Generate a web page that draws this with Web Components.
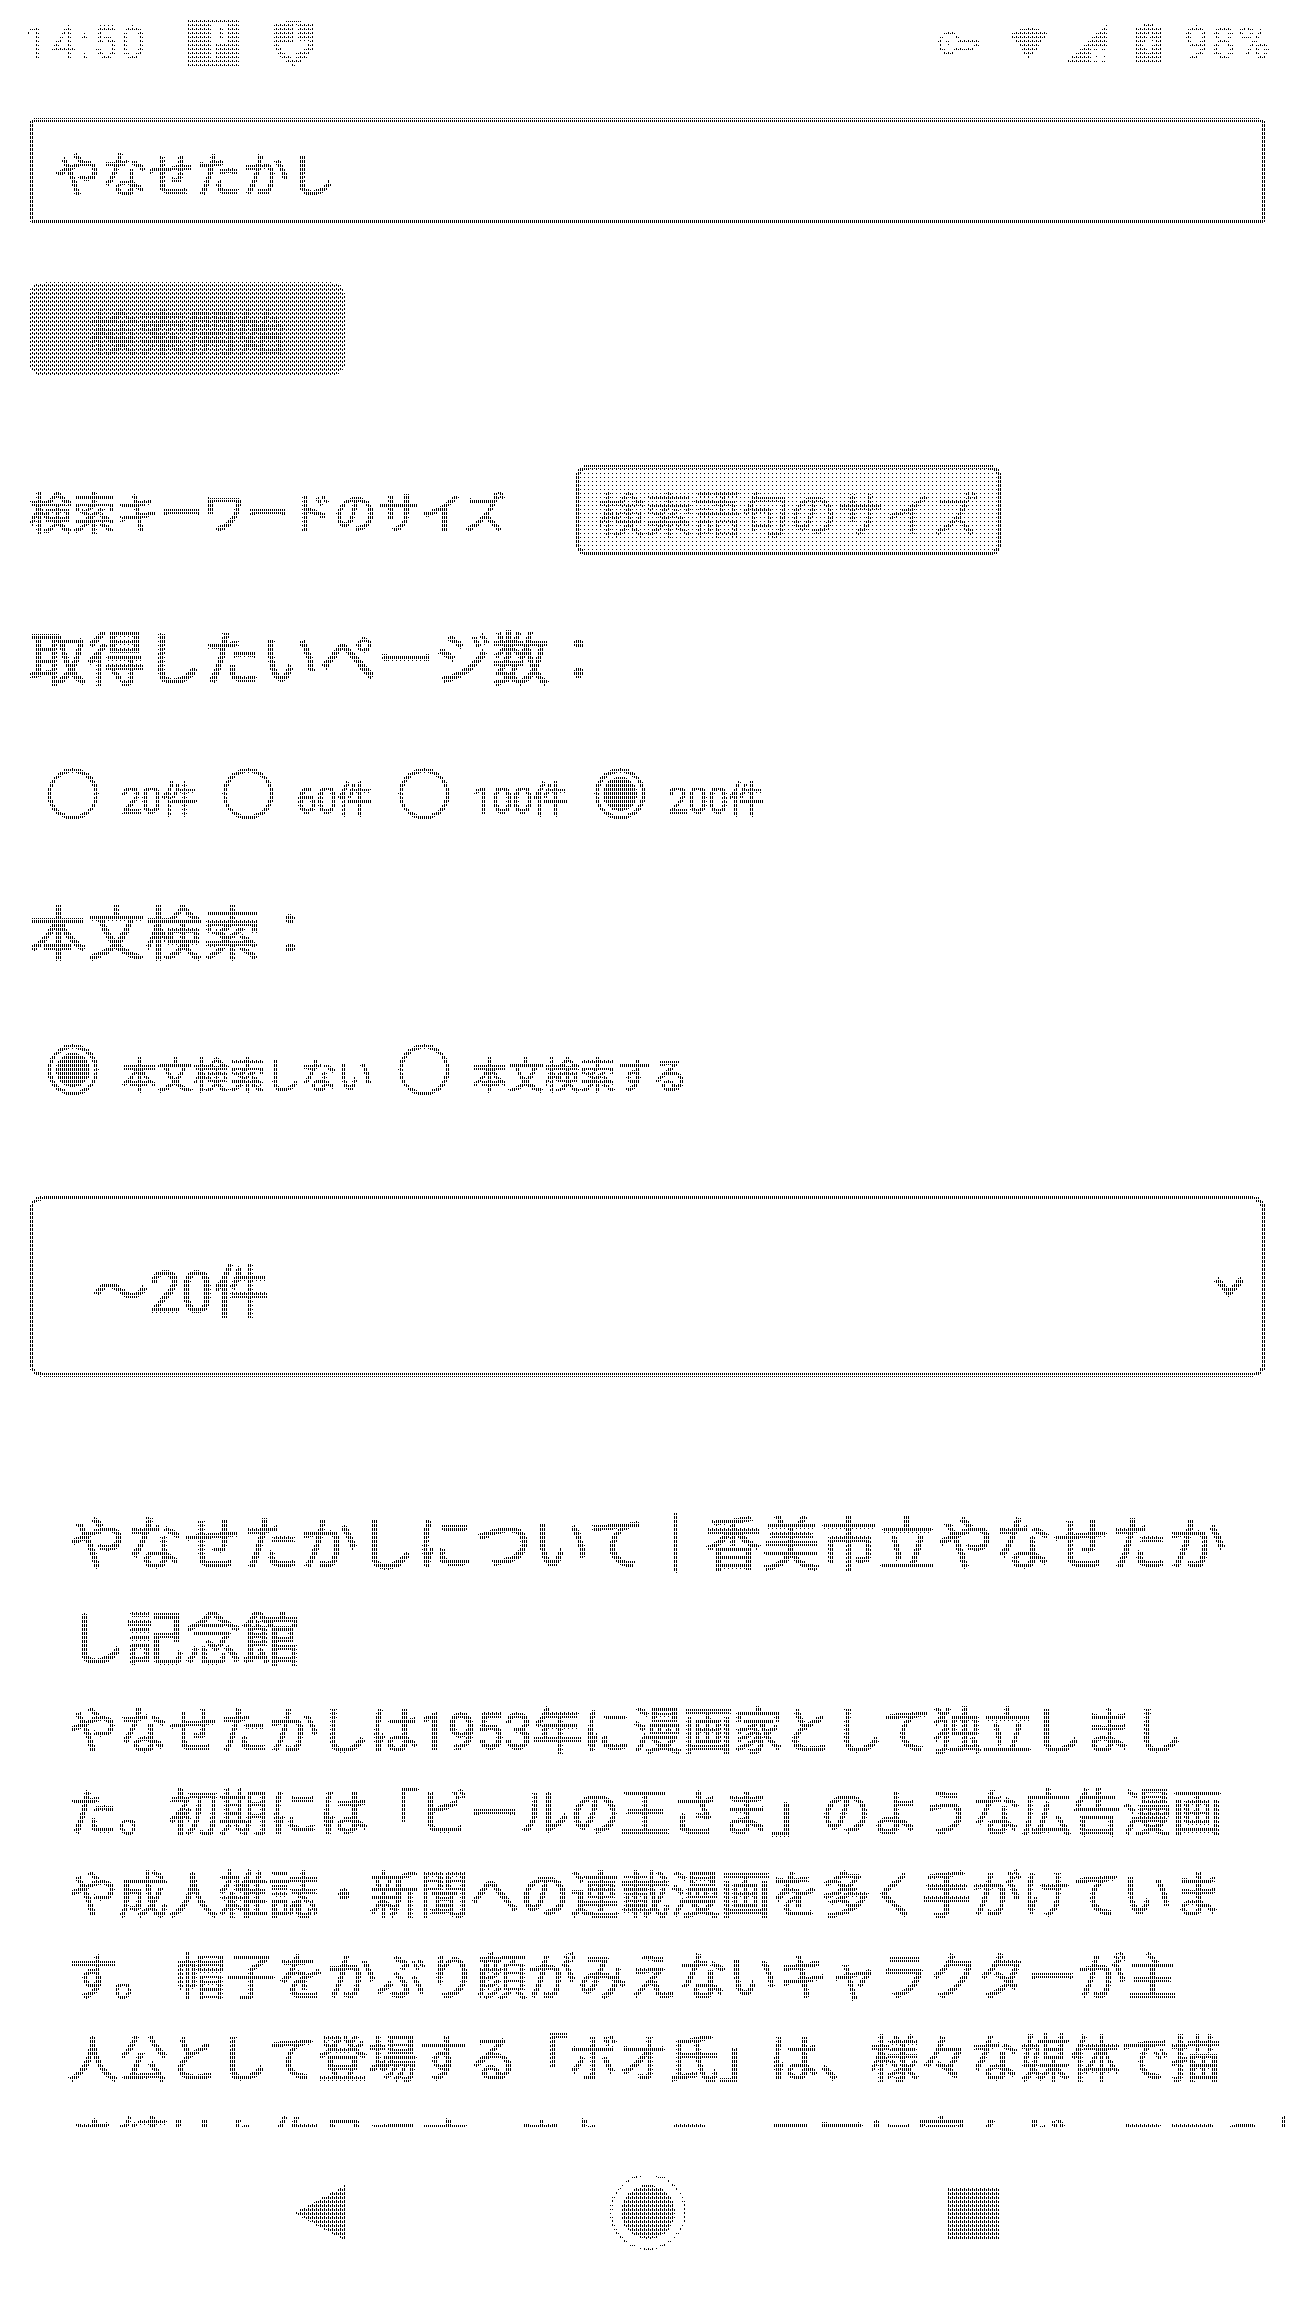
<!DOCTYPE html>
<html lang="ja">
<head>
<meta charset="utf-8">
<title>やなせたかし</title>
<style>
  html, body { margin: 0; padding: 0; background: #fff; }
</style>
</head>
<body>
<app-screen>
  <status-bar></status-bar>
  <search-form>
    <text-field value="やなせたかし"></text-field>
    <action-button>検索開始</action-button>
    <size-tabs first="検索キーワードのサイズ" second="検索語句のサイズ"></size-tabs>
    <form-heading>取得したいページ数&#xFF1A;</form-heading>
    <radio-row style="margin-top:68px">
      <radio-option>20件</radio-option>
      <radio-option>60件</radio-option>
      <radio-option>100件</radio-option>
      <radio-option checked>200件</radio-option>
    </radio-row>
    <form-heading style="margin-top:76px">本文検索&#xFF1A;</form-heading>
    <radio-row style="margin-top:69px">
      <radio-option checked>本文検索しない</radio-option>
      <radio-option>本文検索する</radio-option>
    </radio-row>
    <select-box>〜20件</select-box>
  </search-form>
  <result-item title-text="やなせたかしについて&#xFF5C;香美市立やなせたか<br>し記念館">
    やなせたかしは1953年に漫画家として独立しまし<br>た。初期には「ビールの王さま」のような広告漫画<br>や成人雑誌・新聞への連載漫画を多く手がけていま<br>す。 帽子をかぶり顔がみえないキャラクターが主<br>人公として登場する「ボオ氏」は、様々な媒体で描<br>き続けた作品です。また、ユーモアに富んだ一コマの共く
  </result-item>
  <nav-bar></nav-bar>
</app-screen>

<script>
class AppScreen extends HTMLElement {
  constructor() {
    super();
    this.attachShadow({ mode: "open" }).innerHTML = `
      <style>
        :host { display: block; width: 1294px; height: 2300px; overflow: hidden; }
        .frame {
          display: flex;
          flex-direction: column;
          width: 1294px;
          height: 2300px;
          background: #fff;
          color: #000;
          font-family: Roboto, "Noto Sans CJK JP", sans-serif;
          -webkit-text-stroke: 1.2px currentColor;
          filter: url(#halftone);
        }
        svg { display: block; width: 0; height: 0; }
      </style>
      <svg aria-hidden="true">
        <!-- 4x4 threshold tile: odd columns and the last row always stay white -->
        <filter id="halftone" filterUnits="userSpaceOnUse" primitiveUnits="userSpaceOnUse"
                x="0" y="0" width="1294" height="2300" color-interpolation-filters="sRGB">
          <feFlood x="0" y="0" width="4" height="4" flood-color="#000" result="base"/>
          <feFlood x="0" y="1" width="1" height="1" flood-color="rgb(237,237,237)" result="c1"/>
          <feFlood x="2" y="1" width="1" height="1" flood-color="rgb(199,199,199)" result="c2"/>
          <feFlood x="0" y="0" width="1" height="1" flood-color="rgb(158,158,158)" result="c3"/>
          <feFlood x="2" y="2" width="1" height="1" flood-color="rgb(117,117,117)" result="c4"/>
          <feFlood x="0" y="2" width="1" height="1" flood-color="rgb(77,77,77)" result="c5"/>
          <feFlood x="2" y="0" width="1" height="1" flood-color="rgb(38,38,38)" result="c6"/>
          <feMerge x="0" y="0" width="4" height="4" result="cell">
            <feMergeNode in="base"/><feMergeNode in="c1"/><feMergeNode in="c2"/>
            <feMergeNode in="c3"/><feMergeNode in="c4"/><feMergeNode in="c5"/><feMergeNode in="c6"/>
          </feMerge>
          <feTile x="0" y="0" width="1294" height="2300" in="cell" result="tile"/>
          <feComposite in="SourceGraphic" in2="tile" operator="arithmetic" k1="0" k2="1" k3="-1" k4="0.5"/>
          <feComponentTransfer>
            <feFuncR type="linear" slope="255" intercept="-254"/>
            <feFuncG type="linear" slope="255" intercept="-254"/>
            <feFuncB type="linear" slope="255" intercept="-254"/>
            <feFuncA type="discrete" tableValues="1 1"/>
          </feComponentTransfer>
        </filter>
      </svg>
      <div class="frame"><slot></slot></div>
    `;
  }
}

class StatusBar extends HTMLElement {
  constructor() {
    super();
    this.attachShadow({ mode: "open" }).innerHTML = `
      <style>
        :host {
          display: flex;
          align-items: flex-start;
          justify-content: space-between;
          height: 118px;
          padding: 0 22px 0 24px;
          box-sizing: border-box;
          color: #9a9a9a;
          font-size: 44px;
          letter-spacing: 3px;
          -webkit-text-stroke: 0.5px currentColor;
        }
        .group { display: flex; align-items: center; height: 86px; }
        svg { display: block; fill: #808080; flex: none; }
        .time { width: 163px; line-height: 86px; }
        .pct { margin-left: 22px; letter-spacing: 2px; }
      </style>
      <div class="group">
        <span class="time">14:50</span>
        <svg width="53" height="50" viewBox="0 0 53 50" style="margin-right:32px">
          <path fill-rule="evenodd" d="M0 0h53v50H0zM25 4v36h4V26h12V4zm7 4h5v14h-5z"/>
        </svg>
        <svg width="44" height="46" viewBox="0 0 44 46">
          <path fill-rule="evenodd" d="M22 0l20 4v18c0 11-9 19-20 24C11 41 2 33 2 22V4zM22 5v19H7c1 6 8 12 15 15 2-1 4-2 5-3l-4-2c7-3 13-7 14-12v-1H25V5z"/>
        </svg>
      </div>
      <div class="group">
        <svg width="43" height="24" viewBox="0 0 43 24" style="margin-right:29px">
          <path fill="none" stroke="#808080" stroke-width="3" d="M12 2a10 10 0 1 0 0 20c5 0 7-4 8-5h3l3 3 4-3 3 2 8-7-2-3H20c-1-3-4-7-8-7z"/>
          <circle cx="9" cy="12" r="2.5"/>
        </svg>
        <svg width="38" height="31" viewBox="0 0 38 31" style="margin-right:17px">
          <path d="M0 6C5 2 12 0 19 0s14 2 19 6L19 31z"/>
        </svg>
        <svg width="43" height="39" viewBox="0 0 43 39" style="margin-right:27px">
          <path d="M42 0v22H26v17H0z"/>
          <path d="M29 26h13M29 32h13M29 38h13" stroke="#808080" stroke-width="2" stroke-dasharray="4 3"/>
        </svg>
        <svg width="27" height="42" viewBox="0 0 27 42">
          <path fill-rule="evenodd" d="M8 0h11v4h8v38H0V4h8zM16 10L8 24h5v9l7-14h-5z"/>
        </svg>
        <span class="pct">98%</span>
      </div>
    `;
  }
}

class SearchForm extends HTMLElement {
  constructor() {
    super();
    this.attachShadow({ mode: "open" }).innerHTML = `
      <style>
        :host { display: block; padding: 0 28px 0 29px; flex: none; }
      </style>
      <slot></slot>
    `;
  }
}

class TextField extends HTMLElement {
  constructor() {
    super();
    this.attachShadow({ mode: "open" }).innerHTML = `
      <style>
        :host {
          display: flex;
          align-items: center;
          height: 106px;
          padding: 0 21px;
          box-sizing: border-box;
          border: 4px solid #222;
          border-radius: 7px;
          font-size: 47px;
        }
      </style>
      <span>${this.getAttribute("value")}</span>
    `;
  }
}

class ActionButton extends HTMLElement {
  constructor() {
    super();
    this.attachShadow({ mode: "open" }).innerHTML = `
      <style>
        :host {
          display: flex;
          align-items: center;
          justify-content: center;
          width: 316px;
          height: 94px;
          margin-top: 58px;
          background: #707070;
          border-radius: 14px;
          color: #222;
          font-size: 49px;
        }
      </style>
      <slot></slot>
    `;
  }
}

class SizeTabs extends HTMLElement {
  constructor() {
    super();
    this.attachShadow({ mode: "open" }).innerHTML = `
      <style>
        :host {
          display: flex;
          align-items: center;
          height: 91px;
          margin-top: 89px;
        }
        .plain { width: 546px; font-size: 43.5px; white-space: nowrap; }
        .on {
          display: flex;
          align-items: center;
          justify-content: center;
          width: 427px;
          height: 91px;
          box-sizing: border-box;
          background: #e6e6e6;
          border: 4px solid #222;
          border-radius: 14px;
          color: #3a3a3a;
          font-size: 48px;
          white-space: nowrap;
        }
      </style>
      <span class="plain">${this.getAttribute("first")}</span>
      <span class="on">${this.getAttribute("second")}</span>
    `;
  }
}

class FormHeading extends HTMLElement {
  constructor() {
    super();
    this.attachShadow({ mode: "open" }).innerHTML = `
      <style>
        :host {
          display: block;
          margin-top: 64px;
          font-size: 58px;
          line-height: 80px;
          white-space: nowrap;
          -webkit-text-stroke: 1.2px currentColor;
        }
      </style>
      <slot></slot>
    `;
  }
}

class RadioRow extends HTMLElement {
  constructor() {
    super();
    this.attachShadow({ mode: "open" }).innerHTML = `
      <style>
        :host { display: flex; gap: 25px; padding-left: 18px; height: 51px; }
      </style>
      <slot></slot>
    `;
  }
}

class RadioOption extends HTMLElement {
  constructor() {
    super();
    const dot = this.hasAttribute("checked") ? '<circle cx="26" cy="26" r="17" fill="#000"/>' : "";
    this.attachShadow({ mode: "open" }).innerHTML = `
      <style>
        :host {
          display: flex;
          gap: 22px;
          font-size: 36px;
          white-space: nowrap;
        }
        svg { display: block; flex: none; }
        span { padding-top: 8px; line-height: 51px; }
      </style>
      <svg width="52" height="52" viewBox="0 0 52 52">
        <circle cx="26" cy="26" r="23.5" fill="none" stroke="#000" stroke-width="4"/>${dot}
      </svg>
      <span><slot></slot></span>
    `;
  }
}

class SelectBox extends HTMLElement {
  constructor() {
    super();
    this.attachShadow({ mode: "open" }).innerHTML = `
      <style>
        :host {
          display: flex;
          align-items: center;
          justify-content: space-between;
          height: 181px;
          margin-top: 101px;
          padding: 0 18px 0 59px;
          box-sizing: border-box;
          border: 4px solid #222;
          border-radius: 14px;
          font-size: 57px;
        }
        svg { display: block; }
      </style>
      <span><slot></slot></span>
      <svg width="30" height="20" viewBox="0 0 30 20">
        <path d="M2 2l13 14L28 2" fill="none" stroke="#000" stroke-width="6"/>
      </svg>
    `;
  }
}

class ResultItem extends HTMLElement {
  constructor() {
    super();
    this.attachShadow({ mode: "open" }).innerHTML = `
      <style>
        :host {
          display: block;
          flex: 1;
          min-height: 0;
          margin-top: 121px;
          padding: 0 60px 0 68px;
          overflow: hidden;
          white-space: nowrap;
        }
        h2 {
          margin: 0;
          font-size: 58px;
          font-weight: 400;
          line-height: 95px;
        }
        p {
          margin: 3px 0 0;
          font-size: 50.2px;
          line-height: 82px;
        }
      </style>
      <h2>${this.getAttribute("title-text")}</h2>
      <p><slot></slot></p>
    `;
  }
}

class NavBar extends HTMLElement {
  constructor() {
    super();
    this.attachShadow({ mode: "open" }).innerHTML = `
      <style>
        :host {
          display: flex;
          flex: none;
          align-items: flex-start;
          height: 172px;
          background: #fff;
        }
        .slot { display: flex; justify-content: center; padding-top: 45px; }
        svg { display: block; fill: #4a4a4a; }
      </style>
      <div class="slot" style="width:346px;justify-content:flex-end;padding-top:57px">
        <svg width="52" height="56" viewBox="0 0 52 56"><path d="M52 0v56L0 28z"/></svg>
      </div>
      <div class="slot" style="margin-left:263px">
        <svg width="78" height="78" viewBox="0 0 78 78">
          <circle cx="39" cy="39" r="37" fill="none" stroke="#8a8a8a" stroke-width="2"/>
          <circle cx="39" cy="39" r="27"/>
        </svg>
      </div>
      <div class="slot" style="margin-left:260px;padding-top:60px">
        <svg width="53" height="52" viewBox="0 0 53 52"><rect width="53" height="52"/></svg>
      </div>
    `;
  }
}

customElements.define("app-screen", AppScreen);
customElements.define("status-bar", StatusBar);
customElements.define("search-form", SearchForm);
customElements.define("text-field", TextField);
customElements.define("action-button", ActionButton);
customElements.define("size-tabs", SizeTabs);
customElements.define("form-heading", FormHeading);
customElements.define("radio-row", RadioRow);
customElements.define("radio-option", RadioOption);
customElements.define("select-box", SelectBox);
customElements.define("result-item", ResultItem);
customElements.define("nav-bar", NavBar);
</script>
</body>
</html>
